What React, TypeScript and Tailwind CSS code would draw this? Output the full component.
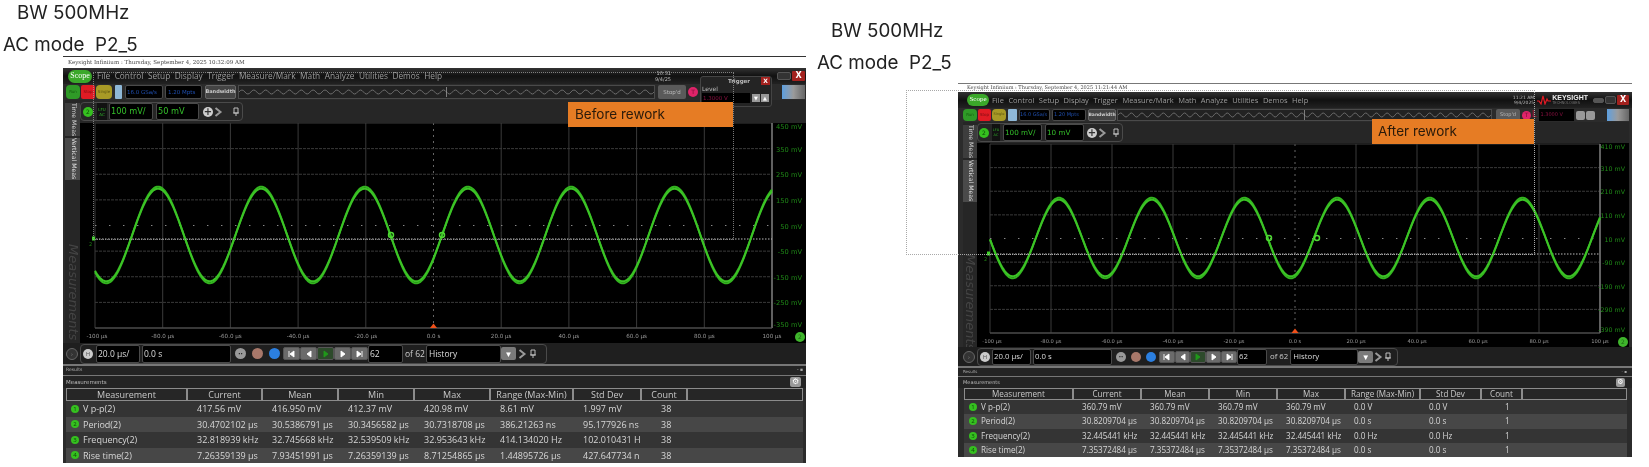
import React from "react";

type ChartCfg = {
  w: number; h: number; gl: number; gr: number; gt: number; gb: number;
  peak: number; period: number; cy: number; amp: number; dotY: number;
  m1: number; m2: number; yl: string[]; fs: number; xfs: number; labEnd: number; labY: number;
};

function wave(c: ChartCfg, d: number) {
  let s = "";
  for (let x = c.gl; x <= c.gr; x += 1) {
    const y = c.cy - (c.amp + d) * Math.cos(((x - c.peak) / c.period) * 2 * Math.PI);
    s += (s ? "L" : "M") + x + " " + y.toFixed(2);
  }
  return s;
}

function Chart({ c }: { c: ChartCfg }) {
  const dx = (c.gr - c.gl) / 10;
  const dy = (c.gb - c.gt) / 8;
  const vs = Array.from({ length: 11 }, (_, i) => c.gl + i * dx);
  const hs = Array.from({ length: 9 }, (_, i) => c.gt + i * dy);
  const xl = ["-100 µs", "-80.0 µs", "-60.0 µs", "-40.0 µs", "-20.0 µs", "0.0 s", "20.0 µs", "40.0 µs", "60.0 µs", "80.0 µs", "100 µs"];
  const midX = vs[5];
  const midY = hs[4];
  return (
    <svg width={c.w} height={c.h} viewBox={`0 0 ${c.w} ${c.h}`} className="bg-black">
      {vs.map((x, i) => (
        <line key={i} x1={x} x2={x} y1={c.gt} y2={c.gb} stroke={i === 5 ? "#666" : "#3a3a3a"} strokeWidth={1} strokeDasharray={i === 5 ? "2 4" : undefined} />
      ))}
      {hs.map((y, i) => (
        <line key={i} x1={c.gl} x2={c.gr} y1={y} y2={y} stroke="#3a3a3a" strokeWidth={1} strokeDasharray={i === 4 ? "2 12" : i === 8 || i === 0 ? undefined : "3 1"} />
      ))}
      <line x1={c.gr} x2={c.gr} y1={c.gt} y2={c.gb} stroke="#777" strokeWidth={1.5} />
      <line x1={c.gl} x2={c.gr} y1={c.gb} y2={c.gb} stroke="#555" strokeWidth={1} />
      <line x1={c.gl} x2={c.gr} y1={midY} y2={midY} stroke="#888" strokeWidth={1} strokeDasharray="1 13" />
      <line x1={c.gl - 2} x2={c.gr} y1={c.dotY} y2={c.dotY} stroke="#b9b9b9" strokeWidth={1} strokeDasharray="1.5 1.5" />
      <path d={wave(c, 1.3)} fill="none" stroke="#33b51f" strokeWidth={2} />
      <path d={wave(c, -0.7)} fill="none" stroke="#3cc426" strokeWidth={2} />
      <circle cx={c.m1} cy={c.cy} r={2.5} fill="none" stroke="#4fd834" strokeWidth={1.5} />
      <circle cx={c.m2} cy={c.cy} r={2.5} fill="none" stroke="#4fd834" strokeWidth={1.5} />
      <rect x={c.gl - 3} y={c.dotY - 2.5} width={3} height={4} fill="#3fd028" />
      <text x={c.gl - 6} y={c.dotY + 7} fill="#1e7a12" fontSize={5} fontFamily="DejaVu Sans">2</text>
      <polygon points={`${midX - 3.5},${c.gb} ${midX + 3.5},${c.gb} ${midX},${c.gb - 4.5}`} fill="#f0501a" />
      {c.yl.map((t, i) => (
        <text key={i} x={c.labEnd} y={i === 0 ? hs[i] + c.labY : i === 8 ? hs[i] - 1 : hs[i] + 3} textAnchor="end" fill="#1f8a17" fontSize={c.fs} fontFamily="DejaVu Sans">{t}</text>
      ))}
      {xl.map((t, i) => (
        <text key={i} x={vs[i] + (i === 0 ? 2 : 0)} y={c.gb + 10} textAnchor="middle" fill="#9a9a9a" fontSize={c.xfs} fontFamily="DejaVu Sans">{t}</text>
      ))}
      <circle cx={c.w - 6} cy={c.gb + 9} r={5} fill="#3fb52c" />
      <text x={c.w - 6} y={c.gb + 11} textAnchor="middle" fill="#1c6a12" fontSize={6} fontFamily="DejaVu Sans">2</text>
    </svg>
  );
}

function Ball({ cls, t }: { cls: string; t?: string }) {
  return <span className={`flex shrink-0 items-center justify-center rounded-full text-[6px] leading-none ${cls}`}>{t}</span>;
}

function Overview() {
  let d = "M0 5";
  for (let i = 0; i < 36; i++) d += ` q3 -4 6 0 q3 4 6 0`;
  return (
    <svg width="100%" height="10" className="block" preserveAspectRatio="none" viewBox="0 0 420 10">
      <path d={d} fill="none" stroke="#8a8a8a" strokeWidth={0.7} />
      <line x1="210" x2="210" y1="0" y2="10" stroke="#aaa" strokeWidth={0.7} />
    </svg>
  );
}

function Transport({ sz }: { sz: string }) {
  const icons = ["M2 1v6M7 1v6L3 4z", "M7 1v6L3 4z", "M3 1v6l4-3z", "M3 1v6l4-3z", "M2 1v6l4-3zM7 1v6"];
  return (
    <div className="flex">
      {icons.map((d, i) => (
        <span key={i} className={`flex items-center justify-center rounded-[2px] border border-[#555] ${i === 2 ? "bg-[#2d4a2b]" : "bg-[#6b6b6b]"} ${sz}`}>
          <svg width="9" height="8" viewBox="0 0 9 8">
            <path d={d} fill={i === 2 ? "#1f9a1a" : "#fff"} stroke={i === 2 ? "#1f9a1a" : "#fff"} strokeWidth={0.9} />
          </svg>
        </span>
      ))}
    </div>
  );
}

function Chevron() {
  return <svg width="9" height="10" viewBox="0 0 9 10"><path d="M1.5 1l5 4-5 4" fill="none" stroke="#9a9a9a" strokeWidth={2} /></svg>;
}
function Pin() {
  return <svg width="8" height="10" viewBox="0 0 8 10"><path d="M2 1h4v5H2zM1 6h6M4 6v3" fill="none" stroke="#bdbdbd" strokeWidth={1} /></svg>;
}

function Table({ grid, hh, rh, fs, data, cls, countCls, nameCls, ballCls }: {
  grid: string; hh: string; rh: string; fs: string; data: string[][]; cls: string; countCls: string; nameCls: string; ballCls: string;
}) {
  const heads = ["Measurement", "Current", "Mean", "Min", "Max", "Range (Max-Min)", "Std Dev", "Count", ""];
  return (
    <div className={`${fs} font-['Open_Sans',sans-serif] leading-none`}>
      <div className={`grid ${grid} ${hh} bg-[#262626]`}>
        {heads.map((h, i) => (
          <div key={i} className="flex items-center justify-center border border-[#8c8c8c] text-[#c9c9c9]">{h}</div>
        ))}
      </div>
      {data.map((r, i) => (
        <div key={i} className={`grid ${grid} ${rh} items-center text-[#d6d6d6] ${i % 2 ? "bg-[#474747]" : "bg-[#343434]"}`}>
          <div className={`flex items-center ${nameCls}`}>
            <Ball cls={`bg-[#35c01f] text-[#0b4a06] ${ballCls}`} t={String(i + 1)} />
            <span>{r[0]}</span>
          </div>
          {r.slice(1, 7).map((c, j) => (
            <div key={j} className={cls}>{c}</div>
          ))}
          <div className={countCls}>{r[7]}</div>
          <div />
        </div>
      ))}
    </div>
  );
}

function Tabs({ gap, fs, h }: { gap: string; fs: string; h: string }) {
  return (
    <div className={`flex flex-col items-center overflow-hidden bg-[#262626] ${h} ${fs}`}>
      <div className="mt-[3px] w-full bg-[#3d3d3d] py-[3px] text-center text-[#cfcfcf] [writing-mode:vertical-rl]">Time Meas</div>
      <div className="mt-[2px] w-full bg-[#4a4a4a] py-[3px] text-center text-[#dedede] [writing-mode:vertical-rl]">Vertical Meas</div>
      <div className={`${gap} text-[13px] italic text-[#444] [writing-mode:vertical-rl]`}>Measurements</div>
    </div>
  );
}

const leftChart: ChartCfg = {
  w: 726, h: 220, gl: 15, gr: 692, gt: 0, gb: 205, peak: 78, period: 103.3, cy: 112, amp: 47, dotY: 116,
  m1: 311, m2: 362, yl: ["450 mV", "350 mV", "250 mV", "150 mV", "50 mV", "-50 mV", "-150 mV", "-250 mV", "-350 mV"], fs: 6.7, xfs: 5.6, labEnd: 722, labY: 6,
};
const rightChart: ChartCfg = {
  w: 652, h: 204, gl: 13, gr: 623, gt: 1, gb: 190, peak: 82, period: 92.7, cy: 95, amp: 39, dotY: 111,
  m1: 292, m2: 340, yl: ["410 mV", "310 mV", "210 mV", "110 mV", "10 mV", "-90 mV", "-190 mV", "-290 mV", "-390 mV"], fs: 6.3, xfs: 5.2, labEnd: 648, labY: 5,
};

const leftData = [
  ["V p-p(2)", "417.56 mV", "416.950 mV", "412.37 mV", "420.98 mV", "8.61 mV", "1.997 mV", "38"],
  ["Period(2)", "30.4702102 µs", "30.5386791 µs", "30.3456582 µs", "30.7318708 µs", "386.21263 ns", "95.177926 ns", "38"],
  ["Frequency(2)", "32.818939 kHz", "32.745668 kHz", "32.539509 kHz", "32.953643 kHz", "414.134020 Hz", "102.010431 H", "38"],
  ["Rise time(2)", "7.26359139 µs", "7.93451991 µs", "7.26359139 µs", "8.71254865 µs", "1.44895726 µs", "427.647734 n", "38"],
];
const rightData = [
  ["V p-p(2)", "360.79 mV", "360.79 mV", "360.79 mV", "360.79 mV", "0.0 V", "0.0 V", "1"],
  ["Period(2)", "30.8209704 µs", "30.8209704 µs", "30.8209704 µs", "30.8209704 µs", "0.0 s", "0.0 s", "1"],
  ["Frequency(2)", "32.445441 kHz", "32.445441 kHz", "32.445441 kHz", "32.445441 kHz", "0.0 Hz", "0.0 Hz", "1"],
  ["Rise time(2)", "7.35372484 µs", "7.35372484 µs", "7.35372484 µs", "7.35372484 µs", "0.0 s", "0.0 s", "1"],
];

const menu = ["File", "Control", "Setup", "Display", "Trigger", "Measure/Mark", "Math", "Analyze", "Utilities", "Demos", "Help"];
const box = "flex h-full items-center rounded-[2px] border border-[#4a4a4a] bg-black";
const base = "font-['DejaVu_Sans',sans-serif] leading-[1.1] whitespace-nowrap blur-[0.6px]";

function LeftScope() {
  return (
    <div className={`relative ml-[63px] -mt-[1px] flex h-[407px] w-[743px] flex-col border-t border-[#333] bg-[#2b2b2b] ${base}`}>
      <div className="flex h-[11px] items-center bg-white pl-[5px] font-['DejaVu_Serif',serif] text-[5.5px] text-[#444]">Keysight Infiniium : Thursday, September 4, 2025 10:32:09 AM</div>
      <div className="flex h-[16px] items-center bg-gradient-to-b from-[#333] via-[#111] to-[#222]">
        <span className="ml-[5px] flex h-[13px] w-[24px] items-center justify-center rounded-full bg-[#3ba82a] font-['Liberation_Serif',serif] text-[8px] text-white">Scope</span>
        <div className="ml-[5px] flex gap-[4.5px] font-['Open_Sans',sans-serif] text-[8.3px] text-[#9c9c9c]">{menu.map((m) => <span key={m}>{m}</span>)}</div>
        <span className="ml-auto mr-[106px] text-right text-[5px] leading-[6px] text-[#bbb]">10:31<br />9/4/25</span>
        <span className="mr-[1px] h-[8px] w-[14px] rounded-[2px] border border-[#555] bg-[#333]" />
        <span className="mr-[1px] flex h-[10px] w-[13px] items-center justify-center rounded-[1px] bg-[#a3211e] text-[8px] font-bold leading-none text-white">X</span>
      </div>
      <div className="flex h-[16px] items-center py-[1px] pl-[3px] text-[5.5px]">
        <span className="flex h-full w-[14px] items-center justify-center rounded-[4px] bg-[#2f9a27] text-[4px] text-[#155c10]">Run</span>
        <span className="ml-[1px] flex h-full w-[14px] items-center justify-center rounded-[2px] bg-[#e01b24] text-[4px] text-[#7a0d12]">Stop</span>
        <span className="ml-[1px] flex h-full w-[16px] items-center justify-center rounded-[4px] bg-[#a89a26] text-[4px] text-[#5c5410]">Single</span>
        <span className="ml-[3px] h-full w-[7px] rounded-[1px] bg-[#8fb8d8]" />
        <span className={`${box} ml-[3px] w-[38px] pl-[1px] text-[#1f4fb0]`}>16.0 GSa/s</span>
        <span className={`${box} ml-[2px] w-[37px] pl-[2px] text-[#1f4fb0]`}>1.20 Mpts</span>
        <span className="ml-[3px] flex h-full w-[31px] items-center justify-center rounded-[2px] border border-[#666] bg-[#444] text-[5px] font-bold text-[#ccc]">Bandwidth</span>
        <div className="ml-[2px] flex h-full w-[417px] items-center border border-[#4a4a4a] bg-[#222]"><Overview /></div>
        <span className="ml-[3px] flex h-full w-[28px] items-center justify-center rounded-[2px] bg-[#5a5a5a] text-[#bbb]">Stop'd</span>
        <Ball cls="ml-[2px] h-[10px] w-[10px] bg-[#e0246a] text-[#7a0d35]" t="T" />
        <span className="ml-[84px] h-full w-[23px] bg-gradient-to-r from-[#5b9fe0] via-[#9a9a9a] to-[#666]" />
      </div>
      <div className="flex">
        <div className="ml-[2px] flex w-[15px] flex-col"><Tabs gap="mt-[64px]" fs="text-[6.2px]" h="h-[243px]" /></div>
        <div className="flex flex-col">
          <div className="flex h-[23px] items-center bg-[#262626] py-[2px]">
            <div className="flex h-[19px] w-[163px] items-center rounded-[4px] border border-[#4a4a4a] pl-[2px]">
              <Ball cls="h-[10px] w-[10px] bg-[#35c01f] text-[#0b4a06]" t="2" />
              <span className="ml-[4px] flex h-full w-[10px] flex-col items-center justify-center bg-[#111] text-center text-[4px] leading-[5px] text-[#2fae2a]">LFU<br />AC</span>
              <span className={`${box} ml-[2px] w-[44px] pl-[1px] text-[8.2px] text-[#34c02a]`}>100 mV/</span>
              <span className={`${box} ml-[3px] w-[43px] pl-[1px] text-[8.2px] text-[#34c02a]`}>50 mV</span>
              <span className="ml-[4px] flex h-[10px] w-[10px] items-center justify-center rounded-full bg-[#cfcfcf] text-[10px] font-bold leading-none text-[#333]">+</span>
              <span className="ml-[1px]"><Chevron /></span>
              <span className="ml-[9px]"><Pin /></span>
            </div>
          </div>
          <Chart c={leftChart} />
        </div>
      </div>
      <div className="flex h-[21px] items-center bg-[#1f1f1f] font-['Open_Sans',sans-serif]">
        <Ball cls="ml-[3px] h-[12px] w-[12px] border border-[#666] bg-[#333] text-[#888]" t="›" />
        <div className="ml-[2px] flex h-[20px] w-[467px] items-center rounded-[4px] border border-[#4a4a4a] pl-[2px] text-[8.5px]">
          <Ball cls="h-[10px] w-[10px] bg-[#ccc] text-[#555]" t="H" />
          <span className={`${box} ml-[3px] w-[44px] pl-[1px] text-[#ddd]`}>20.0 µs/</span>
          <span className={`${box} ml-[2px] w-[89px] pl-[1px] text-[#ddd]`}>0.0 s</span>
          <Ball cls="ml-[4px] h-[11px] w-[11px] bg-[#999] text-[#222]" t="••" />
          <Ball cls="ml-[6px] h-[11px] w-[11px] bg-[#a8786a]" />
          <Ball cls="ml-[6px] h-[11px] w-[11px] bg-[#2b7fe0]" />
          <span className="ml-[3px]"><Transport sz="h-[13px] w-[17px]" /></span>
          <span className={`${box} w-[35px] pl-[1px] text-[#ddd]`}>62</span>
          <span className="ml-[2px] text-[#ccc]">of 62</span>
          <span className={`${box} ml-[1px] w-[75px] pl-[2px] text-[#ddd]`}>History</span>
          <span className="flex h-[13px] w-[15px] items-center justify-center rounded-[2px] bg-[#7a7a7a] text-[8px] font-bold leading-none text-white">▼</span>
          <span className="ml-[2px]"><Chevron /></span>
          <span className="ml-[2px]"><Pin /></span>
        </div>
      </div>
      <div className="h-[2px] bg-[#777]" />
      <div className="flex h-[9px] items-center justify-between bg-[#242424] px-[3px] text-[4.5px] text-[#aaa]"><span>Results</span><span>- ▪</span></div>
      <div className="h-[1px] bg-[#777]" />
      <div className="flex h-[12px] items-center justify-between bg-[#242424] pl-[3px] pr-[5px] text-[5.5px] text-[#bbb]">
        <span>Measurements</span>
        <span className="flex h-[10px] w-[11px] items-center justify-center rounded-[2px] bg-[#999] text-[8px] leading-none text-white">⚙</span>
      </div>
      <div className="px-[3px]">
        <Table grid="grid-cols-[121px_75px_76px_76px_76px_83px_68px_46px_116px]" hh="h-[13px]" rh="h-[15.5px]" fs="text-[9px]" data={leftData} cls="pl-[10px]" countCls="pl-[20px]" nameCls="gap-[4px] pl-[5px]" ballCls="h-[8px] w-[8px]" />
      </div>
      <div className="absolute left-[637px] top-[19px] flex h-[31px] w-[72px] flex-col rounded-[3px] border border-[#444] bg-[#242424] px-[1px] text-[6px] text-[#bbb]">
        <div className="flex items-center justify-between">
          <span className="ml-[26px] text-[5.5px] font-bold">Trigger</span>
          <span className="flex h-[8px] w-[9px] items-center justify-center bg-[#a3211e] text-[6px] font-bold leading-none text-white">X</span>
        </div>
        <span className="leading-[7px]">Level</span>
        <div className="mt-[1px] flex h-[10px] items-center">
          <span className="flex h-full w-[48px] items-center bg-black pl-[1px] text-[5.5px] text-[#8a1040]">1.3000 V</span>
          <span className="ml-[2px] h-[8px] w-[8px] bg-[#999] text-center text-[5px] leading-[8px] text-white">▼</span>
          <span className="ml-[1px] h-[8px] w-[8px] bg-[#999] text-center text-[5px] leading-[8px] text-white">▲</span>
        </div>
      </div>
      <div className="absolute left-[30px] top-[15px] h-[168px] w-[641px] border border-dotted border-[#a8a8a8] opacity-70" />
      <div className="absolute left-[505px] top-[45px] flex h-[25px] w-[165px] items-center bg-[#e67c24] pl-[7px] font-['Inter',sans-serif] text-[13.5px] text-[#2a1a0a]">Before rework</div>
    </div>
  );
}

function RightScope() {
  return (
    <div className={`relative ml-[152px] mt-[8px] flex h-[374px] w-[674px] flex-col border-t border-[#777] bg-[#2b2b2b] ${base}`}>
      <div className="flex h-[8px] items-center bg-white pl-[9px] font-['DejaVu_Serif',serif] text-[5px] text-[#444]">Keysight Infiniium : Thursday, September 4, 2025 11:21:44 AM</div>
      <div className="flex h-[16px] items-center bg-gradient-to-b from-[#333] via-[#111] to-[#222]">
        <span className="ml-[9px] flex h-[12px] w-[22px] items-center justify-center rounded-full bg-[#3ba82a] font-['Liberation_Serif',serif] text-[7px] text-white">Scope</span>
        <div className="ml-[3px] flex gap-[4.5px] font-['Open_Sans',sans-serif] text-[7.5px] text-[#9c9c9c]">{menu.map((m) => <span key={m}>{m}</span>)}</div>
        <span className="ml-auto text-right text-[4.5px] leading-[5px] text-[#bbb]">11:21 AM<br />9/4/2025</span>
        <svg className="ml-[3px]" width="14" height="10" viewBox="0 0 14 10"><path d="M0 6h2l2 3 2-8 2 8 2-5 1 2h3" fill="none" stroke="#e01b24" strokeWidth={1.2} /></svg>
        <span className="ml-[1px] flex flex-col font-['Liberation_Sans',sans-serif] text-[7px] font-bold leading-[6px] text-[#eee]">KEYSIGHT<span className="text-[3.5px] font-normal leading-[4px] text-[#777]">TECHNOLOGIES</span></span>
        <span className="ml-[5px] h-[5px] w-[11px] rounded-[2px] border border-[#555] bg-[#555]" />
        <span className="ml-[1px] h-[8px] w-[11px] rounded-[2px] border border-[#555] bg-[#333]" />
        <span className="ml-[1px] mr-[3px] flex h-[10px] w-[12px] items-center justify-center rounded-[1px] bg-[#a3211e] text-[8px] font-bold leading-none text-white">X</span>
      </div>
      <div className="flex h-[14px] items-center py-[1px] pl-[5px] text-[5px]">
        <span className="flex h-full w-[14px] items-center justify-center rounded-[4px] bg-[#2f9a27] text-[4px] text-[#155c10]">Run</span>
        <span className="ml-[1px] flex h-full w-[13px] items-center justify-center rounded-[2px] bg-[#e01b24] text-[4px] text-[#7a0d12]">Stop</span>
        <span className="ml-[1px] flex h-full w-[14px] items-center justify-center rounded-[4px] bg-[#a89a26] text-[3.5px] text-[#5c5410]">Single</span>
        <span className="ml-[2px] h-full w-[9px] rounded-[1px] bg-[#8fb8d8]" />
        <span className={`${box} ml-[2px] w-[31px] text-[#1f4fb0]`}>16.0 GSa/s</span>
        <span className={`${box} ml-[2px] w-[34px] pl-[1px] text-[#1f4fb0]`}>1.20 Mpts</span>
        <span className="ml-[2px] flex h-full w-[28px] items-center justify-center rounded-[2px] border border-[#666] bg-[#444] text-[4.5px] font-bold text-[#ccc]">Bandwidth</span>
        <div className="ml-[1px] flex h-full w-[375px] items-center border border-[#4a4a4a] bg-[#222]"><Overview /></div>
        <span className="ml-[4px] flex h-full w-[24px] items-center justify-center rounded-[2px] bg-[#5a5a5a] text-[#bbb]">Stop'd</span>
        <Ball cls="ml-[2px] h-[9px] w-[9px] bg-[#e0246a] text-[#7a0d35]" t="T" />
        <span className="ml-[1px] text-[8px] text-[#c0183c]">L</span>
        <span className="ml-[3px] flex h-full w-[35px] items-center bg-black pl-[1px] text-[#8a1040]">1.3000 V</span>
        <span className="ml-[2px] h-[9px] w-[9px] rounded-[2px] bg-[#999]" />
        <span className="ml-[1px] h-[9px] w-[9px] rounded-[2px] bg-[#999]" />
        <span className="ml-[12px] h-full w-[22px] bg-gradient-to-r from-[#5b9fe0] via-[#9a9a9a] to-[#666]" />
      </div>
      <div className="flex">
        <div className="ml-[5px] flex w-[14px] flex-col"><Tabs gap="mt-[52px]" fs="text-[6.2px]" h="h-[225px]" /></div>
        <div className="flex flex-col">
          <div className="flex h-[21px] items-center bg-[#262626] py-[1px]">
            <div className="flex h-[19px] w-[146px] items-center rounded-[4px] border border-[#4a4a4a] pl-[1px]">
              <Ball cls="h-[10px] w-[10px] bg-[#35c01f] text-[#0b4a06]" t="2" />
              <span className="ml-[3px] flex h-full w-[8px] flex-col items-center justify-center bg-[#111] text-center text-[3.5px] leading-[5px] text-[#2fae2a]">LFU<br />AC</span>
              <span className={`${box} ml-[3px] w-[39px] pl-[1px] text-[7.2px] text-[#34c02a]`}>100 mV/</span>
              <span className={`${box} ml-[3px] w-[39px] pl-[1px] text-[7.2px] text-[#34c02a]`}>10 mV</span>
              <span className="ml-[3px] flex h-[10px] w-[10px] items-center justify-center rounded-full bg-[#cfcfcf] text-[10px] font-bold leading-none text-[#333]">+</span>
              <span className="ml-[1px]"><Chevron /></span>
              <span className="ml-[5px]"><Pin /></span>
            </div>
          </div>
          <Chart c={rightChart} />
        </div>
      </div>
      <div className="flex h-[19px] items-center bg-[#1f1f1f] font-['Open_Sans',sans-serif]">
        <Ball cls="ml-[5px] h-[12px] w-[12px] border border-[#666] bg-[#333] text-[#888]" t="›" />
        <div className="ml-[2px] flex h-[18px] w-[421px] items-center rounded-[4px] border border-[#4a4a4a] pl-[2px] text-[7.8px]">
          <Ball cls="h-[10px] w-[10px] bg-[#ccc] text-[#555]" t="H" />
          <span className={`${box} ml-[2px] w-[39px] pl-[1px] text-[#ddd]`}>20.0 µs/</span>
          <span className={`${box} ml-[2px] w-[79px] pl-[1px] text-[#ddd]`}>0.0 s</span>
          <Ball cls="ml-[4px] h-[10px] w-[10px] bg-[#999] text-[#222]" t="••" />
          <Ball cls="ml-[5px] h-[10px] w-[10px] bg-[#a8786a]" />
          <Ball cls="ml-[5px] h-[10px] w-[10px] bg-[#2b7fe0]" />
          <span className="ml-[3px]"><Transport sz="h-[12px] w-[15.6px]" /></span>
          <span className={`${box} w-[30px] pl-[1px] text-[#ddd]`}>62</span>
          <span className="ml-[3px] text-[#ccc]">of 62</span>
          <span className={`${box} ml-[2px] w-[68px] pl-[2px] text-[#ddd]`}>History</span>
          <span className="flex h-[12px] w-[15px] items-center justify-center rounded-[2px] bg-[#7a7a7a] text-[8px] font-bold leading-none text-white">▼</span>
          <span className="ml-[1px]"><Chevron /></span>
          <span className="ml-[1px]"><Pin /></span>
        </div>
      </div>
      <div className="h-[2px] bg-[#777]" />
      <div className="flex h-[8px] items-center justify-between bg-[#242424] px-[5px] text-[4px] text-[#aaa]"><span>Results</span><span>- ▪</span></div>
      <div className="h-[1px] bg-[#777]" />
      <div className="flex h-[11px] items-center justify-between bg-[#242424] pl-[5px] pr-[7px] text-[5px] text-[#bbb]">
        <span>Measurements</span>
        <span className="flex h-[9px] w-[9px] items-center justify-center rounded-[2px] bg-[#999] text-[7px] leading-none text-white">⚙</span>
      </div>
      <div className="pl-[6px] pr-[5px]">
        <Table grid="grid-cols-[109px_68px_68px_68px_68px_75px_61px_41px_105px]" hh="h-[12px]" rh="h-[14.25px]" fs="text-[8.1px]" data={rightData} cls="pl-[9px]" countCls="pl-[24px]" nameCls="gap-[4px] pl-[5px]" ballCls="h-[8px] w-[8px]" />
      </div>
      <div className="absolute left-[-52px] top-[6px] h-[165px] w-[629px] border border-dotted border-[#a8a8a8]" />
      <div className="absolute left-[414px] top-[35px] flex h-[25px] w-[162px] items-center bg-[#e67c24] pl-[6px] font-['Inter',sans-serif] text-[13.5px] text-[#2a1a0a]">After rework</div>
    </div>
  );
}

export default function App() {
  return (
    <div className="flex h-[467px] w-[1649px] overflow-hidden bg-white font-['Inter',sans-serif] text-[18.8px] leading-[24px] text-[#222]">
      <section className="w-[806px] shrink-0">
        <div className="pl-[17px] pt-[1px] blur-[0.3px]">BW 500MHz</div>
        <div className="pl-[3px] pt-[8px] blur-[0.3px]">AC mode&nbsp; P2_5</div>
        <LeftScope />
      </section>
      <section className="w-[843px] shrink-0">
        <div className="pl-[25px] pt-[19px] blur-[0.3px]">BW 500MHz</div>
        <div className="pl-[11px] pt-[8px] blur-[0.3px]">AC mode&nbsp; P2_5</div>
        <RightScope />
      </section>
    </div>
  );
}
